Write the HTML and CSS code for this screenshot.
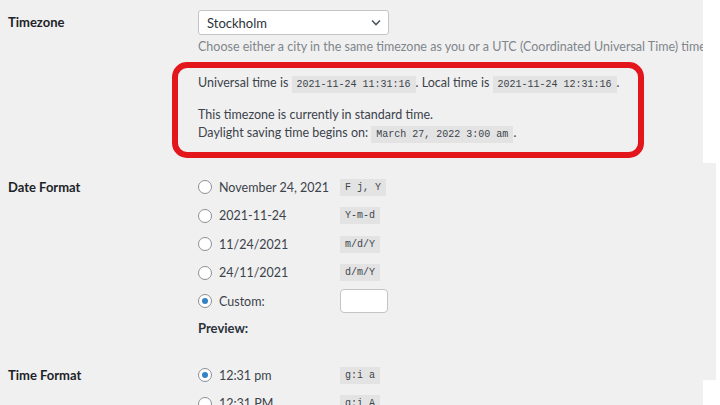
FILE: index.html
```html
<!DOCTYPE html>
<html lang="en">
<head>
    <meta charset="UTF-8">
    <title>General Settings</title>
    <link rel="stylesheet" href="styles.css">
</head>
<body>
    <div class="page">
        <div class="row row-timezone">
            <div class="label">Timezone</div>
            <div class="field">
                <div class="select">
                    <span>Stockholm</span>
                    <svg class="chevron" width="10" height="7" viewBox="0 0 10 7"><path d="M1 1.5 L5 5.5 L9 1.5" fill="none" stroke="#50575e" stroke-width="1.6"/></svg>
                </div>
                <p class="desc">Choose either a city in the same timezone as you or a UTC (Coordinated Universal Time) time offset.</p>
                <div class="highlight">
                    <p class="line">Universal time is <code>2021-11-24 11:31:16</code>. Local time is <code>2021-11-24 12:31:16</code>.</p>
                    <p class="line gap">This timezone is currently in standard time.</p>
                    <p class="line">Daylight saving time begins on: <code>March 27, 2022 3:00 am</code>.</p>
                </div>
            </div>
        </div>

        <div class="row row-date">
            <div class="label">Date Format</div>
            <div class="field">
                <div class="option"><span class="radio"></span><span class="opt-text">November 24, 2021</span><code>F j, Y</code></div>
                <div class="option"><span class="radio"></span><span class="opt-text">2021-11-24</span><code>Y-m-d</code></div>
                <div class="option"><span class="radio"></span><span class="opt-text">11/24/2021</span><code>m/d/Y</code></div>
                <div class="option"><span class="radio"></span><span class="opt-text">24/11/2021</span><code>d/m/Y</code></div>
                <div class="option"><span class="radio checked"></span><span class="opt-text">Custom:</span><span class="custom-input"></span></div>
                <div class="preview">Preview:</div>
            </div>
        </div>

        <div class="row row-time">
            <div class="label">Time Format</div>
            <div class="field">
                <div class="option"><span class="radio checked"></span><span class="opt-text">12:31 pm</span><code>g:i a</code></div>
                <div class="option"><span class="radio"></span><span class="opt-text">12:31 PM</span><code>g:i A</code></div>
            </div>
        </div>
    </div>
</body>
</html>
```

FILE: styles.css
```css
body {
    margin: 0;
    background: #fff;
    font-family: Lato, "Noto Sans", sans-serif;
    font-size: 12.5px;
    color: #3c434a;
    overflow: hidden;
}

.page {
    width: 720px;
    height: 405px;
    overflow: hidden;
}

.row {
    display: flex;
    background: #f0f0f1;
    width: 703px;
    overflow: hidden;
}

.label {
    width: 190px;
    padding-left: 8px;
    font-size: 13px;
    font-weight: 700;
    color: #1d2327;
    flex-shrink: 0;
}

.field {
    flex: 1;
    min-width: 0;
}

p {
    margin: 0;
}

code {
    font-family: "Liberation Mono", "DejaVu Sans Mono", monospace;
    font-size: 10px;
    background: #e3e3e4;
    padding: 3px 5px;
    color: #3c434a;
}

/* timezone */
.row-timezone {
    height: 163px;
    padding-top: 10px;
    box-sizing: border-box;
}

.row-timezone .label {
    line-height: 25px;
}

.select {
    width: 191px;
    height: 25px;
    box-sizing: border-box;
    border: 1px solid #c3c4c7;
    border-radius: 3px;
    background: #fff;
    display: flex;
    align-items: center;
    justify-content: space-between;
    padding: 0 7px 0 8px;
    font-size: 13px;
    color: #2c3338;
}

.desc {
    margin-top: 3px;
    color: #80868b;
    white-space: nowrap;
    line-height: 18px;
}

.highlight {
    margin: 6px 0 0 -26px;
    width: 472px;
    height: 96px;
    box-sizing: border-box;
    border: 6px solid #e3161b;
    border-radius: 15px;
    padding: 3px 0 0 20px;
}

.line {
    line-height: 18px;
    white-space: nowrap;
}

.highlight .line:first-child {
    margin-top: 3px;
}

.line.gap {
    margin-top: 12px;
}

/* date / time formats */
.row-date {
    width: 716px;
    height: 197px;
    padding-top: 14px;
    box-sizing: border-box;
}

.row-date .label,
.row-time .label {
    line-height: 20px;
}

.option {
    display: flex;
    align-items: center;
    height: 20px;
    margin-bottom: 8.5px;
}

.radio {
    width: 14px;
    height: 14px;
    box-sizing: border-box;
    border: 1px solid #8c8f94;
    border-radius: 50%;
    background: #fff;
    margin-right: 7px;
    position: relative;
    flex-shrink: 0;
}

.radio.checked::after {
    content: "";
    position: absolute;
    left: 3px;
    top: 3px;
    width: 6px;
    height: 6px;
    border-radius: 50%;
    background: #3582c4;
}

.opt-text {
    width: 121px;
    flex-shrink: 0;
    white-space: nowrap;
}

.custom-input {
    width: 48px;
    height: 24px;
    box-sizing: border-box;
    border: 1px solid #c3c4c7;
    border-radius: 4px;
    background: #fff;
}

.preview {
    font-size: 13px;
    font-weight: 700;
    color: #2c3338;
    margin-top: 9px;
}

.row-time {
    width: 716px;
    height: 45px;
    padding-top: 5px;
    box-sizing: border-box;
    background: linear-gradient(#f0f0f1, #f0f0f1) 0 0 / 716px 20px no-repeat,
                linear-gradient(#f0f0f1, #f0f0f1) 0 0 / 703px 100% no-repeat,
                #fff;
}
```
